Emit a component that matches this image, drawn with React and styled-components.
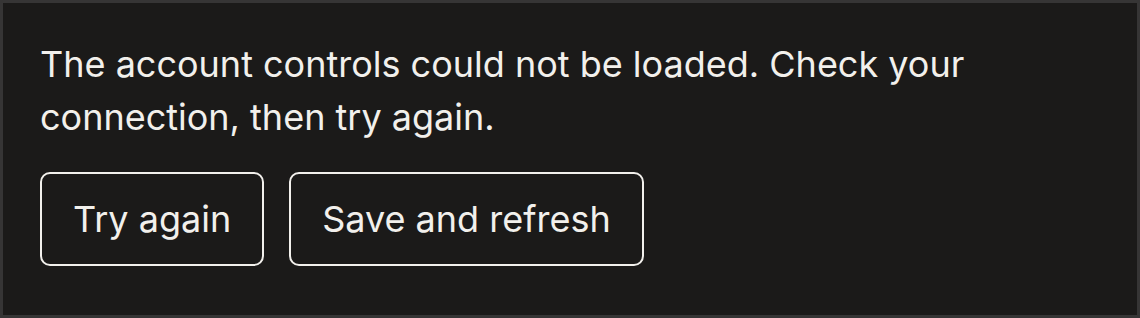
import styled, { createGlobalStyle } from "styled-components"

const Global = createGlobalStyle`
  html, body { margin: 0; padding: 0; background: #1b1a19; }
  * { box-sizing: border-box; }
`;

const Panel = styled.div`
  width: 1140px;
  height: 318px;
  border: 3px solid #363535;
  background: #1b1a19;
  padding: 35px 37px;
  font-family: Inter, "Noto Sans", sans-serif;
  color: #f2f0ec;
`;

const Message = styled.p`
  margin: 0;
  font-size: 36px;
  line-height: 53px;
  max-width: 1000px;
`;

const Actions = styled.div`
  display: flex;
  gap: 25px;
  margin-top: 28px;
`;

const Button = styled.button`
  font-family: inherit;
  font-size: 36px;
  line-height: 50px;
  color: #f2f0ec;
  background: transparent;
  border: 2px solid #f2f0ec;
  border-radius: 10px;
  padding: 20px 31px;
  cursor: pointer;
`;

const App = () => {
  return (
    <>
      <Global />
      <Panel>
        <Message>
          The account controls could not be loaded. Check your connection, then try again.
        </Message>
        <Actions>
          <Button>Try again</Button>
          <Button>Save and refresh</Button>
        </Actions>
      </Panel>
    </>
  )
}

export default App
